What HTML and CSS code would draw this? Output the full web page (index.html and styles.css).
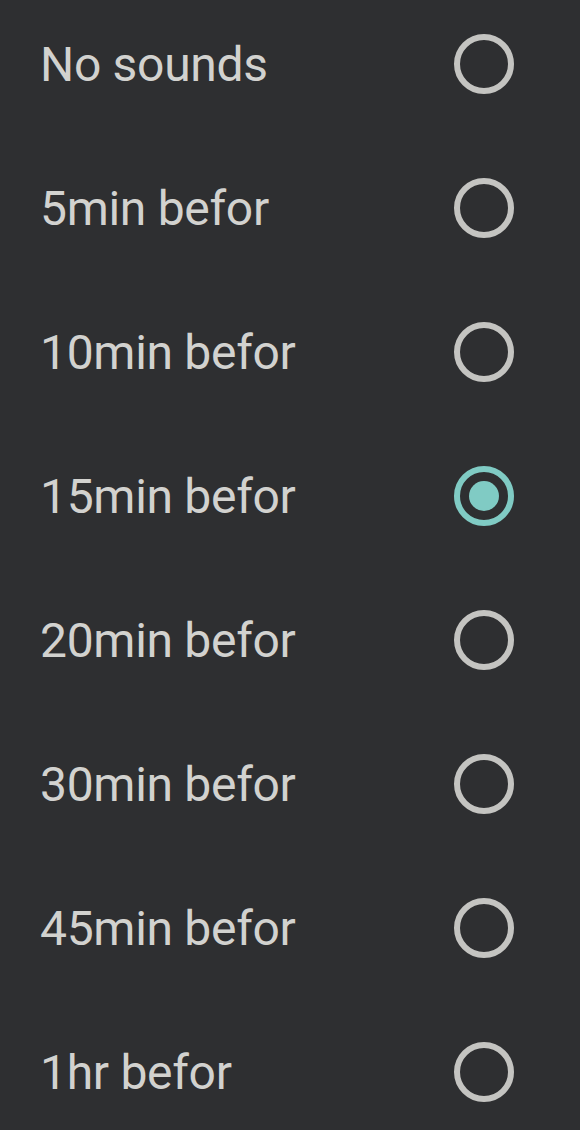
FILE: index.html
```html
<!DOCTYPE html>
<html>
<head>
    <title>Reminder</title>
    <meta name="viewport" content="width=device-width, initial-scale=1.0">
    <link rel="stylesheet" href="styles.css">
</head>
<body>
    <div class="list">
        <label class="row"><span class="text">No sounds</span><span class="radio"></span></label>
        <label class="row"><span class="text">5min befor</span><span class="radio"></span></label>
        <label class="row"><span class="text">10min befor</span><span class="radio"></span></label>
        <label class="row"><span class="text">15min befor</span><span class="radio checked"></span></label>
        <label class="row"><span class="text">20min befor</span><span class="radio"></span></label>
        <label class="row"><span class="text">30min befor</span><span class="radio"></span></label>
        <label class="row"><span class="text">45min befor</span><span class="radio"></span></label>
        <label class="row"><span class="text">1hr befor</span><span class="radio"></span></label>
    </div>
</body>
</html>
```

FILE: styles.css
```css
html, body {
    margin: 0;
    background: #2e2f31;
}
body {
    font-family: Roboto, "Noto Sans", sans-serif;
    overflow: hidden;
}
.list {
    margin-top: -8px;
}
.row {
    display: flex;
    align-items: center;
    justify-content: space-between;
    height: 144px;
    padding: 0 66px 0 40px;
}
.text {
    font-size: 48px;
    letter-spacing: -0.3px;
    color: #d2d2cf;
}
.radio {
    width: 48px;
    height: 48px;
    border: 6px solid #c4c4c1;
    border-radius: 50%;
    display: flex;
    align-items: center;
    justify-content: center;
}
.radio.checked {
    border-color: #80cbc4;
}
.radio.checked::after {
    content: "";
    width: 30px;
    height: 30px;
    border-radius: 50%;
    background: #80cbc4;
}
```
